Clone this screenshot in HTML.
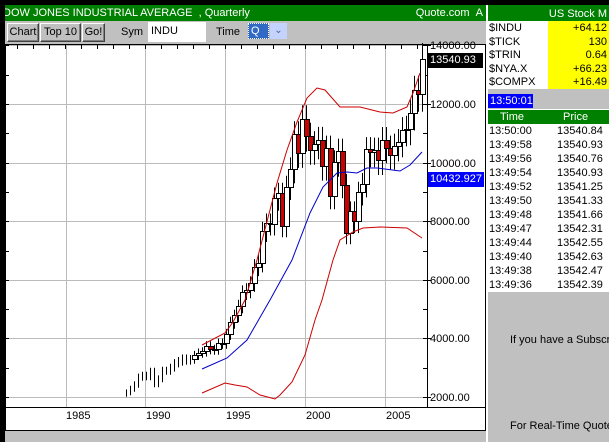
<!DOCTYPE html>
<html><head><meta charset="utf-8">
<style>
*{margin:0;padding:0;box-sizing:border-box}
body{width:609px;height:442px;overflow:hidden;background:#c0c0c0;font-family:"Liberation Sans",sans-serif;position:relative}
.abs{position:absolute}
.btn{position:absolute;top:23px;height:19px;background:#c0c0c0;border:1px solid;border-color:#fff #404040 #404040 #fff;box-shadow:inset -1px -1px #808080;font-size:11px;line-height:17px;text-align:center;color:#000}
.lbl{position:absolute;font-size:11px;color:#000;white-space:nowrap}
.row{position:absolute;left:487px;width:122px;height:14px;font-size:11px;line-height:14px}
.row .n{position:absolute;left:2px}
.row .v{position:absolute;left:61px;width:61px;background:#ffff00;text-align:right;padding-right:2px;height:14px}
.tr{position:absolute;left:489px;font-size:11px;height:14px;line-height:14px;white-space:nowrap}
.tr span{position:absolute}
</style></head><body>
<div class="abs" style="left:0;top:0;width:609px;height:5px;background:#000"></div>
<div class="abs" style="left:0;top:5px;width:487px;height:16px;background:#008000;color:#fff;font-size:11px;line-height:16px;padding-left:3px;white-space:nowrap">DOW JONES INDUSTRIAL AVERAGE &nbsp;, Quarterly<span style="position:absolute;right:4px">Quote.com &nbsp;A</span></div>
<div class="abs" style="left:0;top:5px;width:5px;height:437px;background:#000"></div>
<div class="btn" style="left:7px;width:32px">Chart</div>
<div class="btn" style="left:40px;width:41px">Top 10</div>
<div class="btn" style="left:82px;width:23px">Go!</div>
<div class="lbl" style="left:121px;top:26px">Sym</div>
<div class="abs" style="left:148px;top:22px;width:58px;height:20px;background:#fff;font-size:11px;padding:3px 3px">INDU</div>
<div class="lbl" style="left:216px;top:26px">Time</div>
<div class="abs" style="left:248px;top:23px;width:21px;height:16px;background:#316ac5;border:1px dotted #fff;color:#fff;font-size:11px;line-height:14px;padding-left:2px">Q</div>
<div class="abs" style="left:270px;top:23px;width:17px;height:16px;background:#c3d3fd;color:#4d6185;font-size:10px;text-align:center;line-height:16px">&#8964;</div>

<div class="abs" style="left:5px;top:44px;width:481px;height:387px;background:#fff"></div>
<svg class="abs" style="left:0;top:0" width="609" height="442" id="ch"></svg>
<div class="abs" style="left:428px;top:53px;width:55px;height:15px;background:#000;color:#fff;font-size:11px;line-height:15px;padding-left:2px">13540.93</div>
<div class="abs" style="left:428px;top:172px;width:56px;height:15px;background:#0000ff;color:#fff;font-size:11px;line-height:15px;padding-left:2px">10432.927</div>

<div class="abs" style="left:486px;top:5px;width:2px;height:437px;background:#fff"></div>
<div class="abs" style="left:488px;top:5px;width:121px;height:16px;background:#008000;color:#fff;font-size:11px;line-height:18px;text-align:right;padding-right:2px">US Stock M</div>
<div class="abs" style="left:488px;top:21px;width:121px;height:68px;background:#fff"></div>
<div class="row" style="top:21px"><span class="n">$INDU</span><span class="v">+64.12</span></div>
<div class="row" style="top:35px"><span class="n">$TICK</span><span class="v">130</span></div>
<div class="row" style="top:48px"><span class="n">$TRIN</span><span class="v">0.64</span></div>
<div class="row" style="top:62px"><span class="n">$NYA.X</span><span class="v">+66.23</span></div>
<div class="row" style="top:75px"><span class="n">$COMPX</span><span class="v">+16.49</span></div>
<div class="abs" style="left:488px;top:94px;width:45px;height:14px;background:#0000ff;color:#fff;font-size:11px;line-height:14px;padding-left:2px">13:50:01</div>
<div class="abs" style="left:488px;top:109px;width:121px;height:183px;background:#fff"></div>
<div class="abs" style="left:488px;top:110px;width:121px;height:14px;background:#008000;color:#fff;font-size:11px;line-height:14px"><span style="position:absolute;left:12px">Time</span><span style="position:absolute;left:75px">Price</span></div>
<div id="tl"></div>
<div class="lbl" style="left:510px;top:334px">If you have a Subscri</div>
<div class="lbl" style="left:510px;top:420px">For Real-Time Quote</div>
<script>
var tl=[["13:50:00","13540.84"],["13:49:58","13540.93"],["13:49:56","13540.76"],["13:49:54","13540.93"],["13:49:52","13541.25"],["13:49:50","13541.33"],["13:49:48","13541.66"],["13:49:47","13542.31"],["13:49:44","13542.55"],["13:49:40","13542.63"],["13:49:38","13542.47"],["13:49:36","13542.39"]];
var h="";tl.forEach(function(r,i){h+='<div class="tr" style="top:'+(124+i*14)+'px"><span style="left:0">'+r[0]+'</span><span style="left:68px">'+r[1]+'</span></div>';});
document.getElementById("tl").innerHTML=h;
function X(y){return 305+(y-2000)*16}
function Y(p){return 397-(p-2000)*0.0293}
var s="";
s+='<rect x="5.5" y="44.5" width="480" height="386" fill="none" stroke="#000"/>';
s+='<line x1="5" y1="407.5" x2="486" y2="407.5" stroke="#000"/>';
s+='<line x1="427.5" y1="44" x2="427.5" y2="407" stroke="#000"/>';
[66,145,225,305,385].forEach(function(x){s+='<line x1="'+x+'.5" y1="45" x2="'+x+'.5" y2="407" stroke="#bbb"/>'});
[14000,12000,10000,8000,6000,4000,2000].forEach(function(p){var y=Math.round(Y(p));s+='<line x1="6" y1="'+y+'.5" x2="427" y2="'+y+'.5" stroke="#bbb"/><line x1="423" y1="'+y+'.5" x2="431" y2="'+y+'.5" stroke="#000"/><line x1="5" y1="'+y+'.5" x2="9" y2="'+y+'.5" stroke="#000"/><text x="430" y="'+(y+4)+'" font-size="11" font-family="Liberation Sans">'+p.toFixed(2)+'</text>';
 var y2=Math.round(Y(p+1000));if(p<14000)s+='<line x1="423" y1="'+y2+'.5" x2="428" y2="'+y2+'.5" stroke="#000"/><line x1="5" y1="'+y2+'.5" x2="9" y2="'+y2+'.5" stroke="#000"/>';});
for(var yr=1981;yr<=2007;yr++){var xx=Math.round(X(yr));s+='<line x1="'+xx+'.5" y1="45" x2="'+xx+'.5" y2="49" stroke="#000"/>';}
[1985,1990,1995,2000,2005].forEach(function(yr){s+='<text x="'+(X(yr)+1)+'" y="419" font-size="11" font-family="Liberation Sans">'+yr+'</text>'});
var c=[1900,1988,2141,2112,2168,2293,2440,2692,2753,2707,2880,2452,2633,2913,2906,3016,3168,3235,3318,3271,3301,3435,3516,3555,3754,3635,3624,3843,3834,4157,4556,4789,5117,5587,5654,5882,6448,6583,7672,7945,7908,8799,8952,7842,9181,9786,10970,10336,11497,10921,10447,10650,10787,9878,10502,8847,10021,10403,9243,7591,8341,7992,8985,9275,10453,10357,10435,10080,10783,10503,10274,10568,10717,11109,11150,11679,12463,12354,13540];
for(var i=4;i<c.length;i++){var t=1988+(i-1)/4+0.05;var px=Math.round(X(t));var o=c[i-1],cl=c[i];var hi=Math.max(o,cl)*1.04,lo=Math.min(o,cl)*0.95;
 s+='<line x1="'+px+'.5" y1="'+Y(hi).toFixed(1)+'" x2="'+px+'.5" y2="'+Y(lo).toFixed(1)+'" stroke="#000"/>';
 if(t>1993){var yt=Math.round(Y(Math.max(o,cl))),yb=Math.round(Y(Math.min(o,cl)));s+='<rect x="'+(px-2)+'.5" y="'+yt+'.5" width="5" height="'+Math.max(1,yb-yt)+'" fill="'+(cl<o?'#cc0000':'#fff')+'" stroke="#000"/>';}}
function pl(a,col){return '<polyline points="'+a.map(function(q){return q[0]+','+q[1]}).join(' ')+'" fill="none" stroke="'+col+'"/>'}
s+=pl([[202,369],[227,358],[247,340],[270,300],[292,260],[310,213],[323,187],[337,173],[347,172],[357,173],[367,168],[377,168],[400,171],[410,165],[422,152]],'#0000cc');
s+=pl([[202,345],[225,333],[233,322],[245,300],[257,260],[277,183],[287,150],[297,122],[307,98],[317,88],[325,90],[340,107],[360,107],[380,112],[393,113],[407,107],[413,93],[420,73]],'#cc0000');
s+=pl([[202,393],[225,383],[235,385],[247,387],[260,395],[275,399],[280,395],[292,382],[305,355],[315,320],[322,300],[333,260],[340,240],[353,232],[363,228],[380,227],[407,228],[422,238]],'#cc0000');
document.getElementById("ch").innerHTML=s;
</script>
</body></html>
